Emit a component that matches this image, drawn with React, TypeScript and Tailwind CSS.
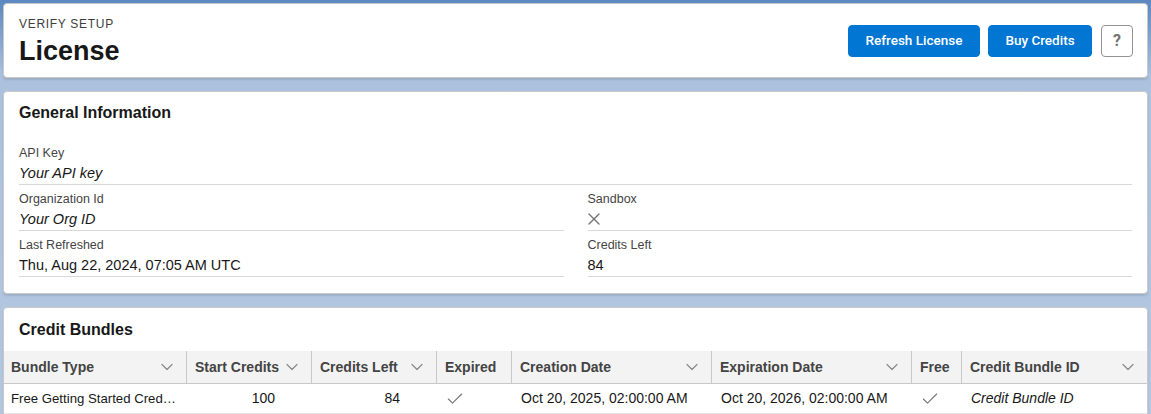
import { Check, X } from "lucide-react";

const font = { fontFamily: '"Liberation Sans", Arial, sans-serif' };
const buttonFont = { fontFamily: 'Roboto, "Liberation Sans", Arial, sans-serif' };

type Column = {
  label: string;
  width: string;
  sortable: boolean;
};

const columns: Column[] = [
  { label: "Bundle Type", width: "w-[183px]", sortable: true },
  { label: "Start Credits", width: "w-[125px]", sortable: true },
  { label: "Credits Left", width: "w-[125px]", sortable: true },
  { label: "Expired", width: "w-[75px]", sortable: false },
  { label: "Creation Date", width: "w-[200px]", sortable: true },
  { label: "Expiration Date", width: "w-[200px]", sortable: true },
  { label: "Free", width: "w-[50px]", sortable: false },
  { label: "Credit Bundle ID", width: "flex-1", sortable: true },
];

function Chevron() {
  return (
    <svg width="12" height="8" viewBox="0 0 12 8" className="shrink-0">
      <polyline
        points="1,1.5 6,6.5 11,1.5"
        fill="none"
        stroke="#8a8a8a"
        strokeWidth="1.2"
        strokeLinecap="round"
        strokeLinejoin="round"
      />
    </svg>
  );
}

function Field({ label, children }: { label: string; children: React.ReactNode }) {
  return (
    <div className="flex flex-col border-b border-[#d8d8d8]">
      <div className="text-[12.5px] leading-[18px] text-[#444444]">{label}</div>
      <div className="text-[14.5px] leading-[22px] text-[#181818] h-[22px] flex items-center">
        {children}
      </div>
    </div>
  );
}

function Card({ className = "", children }: { className?: string; children: React.ReactNode }) {
  return (
    <div
      className={`bg-white rounded-[4px] border border-[#c9c9c9] shadow-[0_2px_2px_rgba(0,0,0,0.1)] ${className}`}
    >
      {children}
    </div>
  );
}

export default function App() {
  return (
    <div
      className="w-[1151px] h-[414px] overflow-hidden bg-linear-to-b from-[#5b88c0] via-[#abc1dd] via-[18%] to-[#b4c7e1] px-[3px] pt-[3px] flex flex-col gap-[13px]"
      style={font}
    >
      {/* Page header */}
      <Card className="h-[75px] shrink-0 flex items-center justify-between pl-[15px] pr-[14px]">
        <div className="flex flex-col gap-[2px]">
          <div className="text-[12px] leading-[18px] tracking-[0.7px] text-[#3e3e3c] uppercase">
            Verify Setup
          </div>
          <h1 className="text-[27px] leading-[32px] font-bold text-[#181818]">License</h1>
        </div>
        <div className="flex items-center gap-2" style={buttonFont}>
          <button className="h-8 w-[132px] rounded-[4px] border border-[#0176d3] bg-[#0176d3] text-white text-[13.5px] font-medium">
            Refresh License
          </button>
          <button className="h-8 w-[104px] rounded-[4px] border border-[#0176d3] bg-[#0176d3] text-white text-[13.5px] font-medium">
            Buy Credits
          </button>
          <button className="w-8 h-8 rounded-[4px] border border-[#939393] bg-white text-[#747474] text-[16px] font-bold flex items-center justify-center ml-[1px]">
            ?
          </button>
        </div>
      </Card>

      {/* General information */}
      <Card className="h-[203px] shrink-0 px-[15px] pt-[9px]">
        <h2 className="text-[16px] leading-[24px] font-bold text-[#181818]">General Information</h2>
        <div className="mt-[19px] flex flex-col gap-[5px]">
          <Field label="API Key">
            <span className="italic">Your API key</span>
          </Field>
          <div className="grid grid-cols-2 gap-x-6 gap-y-[5px]">
            <Field label="Organization Id">
              <span className="italic">Your Org ID</span>
            </Field>
            <Field label="Sandbox">
              <X size={20} strokeWidth={1.6} color="#747474" className="-ml-[4px]" />
            </Field>
            <Field label="Last Refreshed">Thu, Aug 22, 2024, 07:05 AM UTC</Field>
            <Field label="Credits Left">84</Field>
          </div>
        </div>
      </Card>

      {/* Credit bundles table */}
      <Card className="flex-1 pt-[10px] rounded-b-none">
        <h2 className="px-[15px] text-[16px] leading-[24px] font-bold text-[#181818]">
          Credit Bundles
        </h2>
        <div className="mt-[9px]">
          <div className="flex h-[33px] bg-[#f3f3f3] border-b border-[#c9c9c9]">
            {columns.map((col, i) => (
              <div
                key={col.label}
                className={`${col.width} flex items-center justify-between pr-[13px] ${
                  i === 0 ? "pl-[7px]" : "pl-[8px]"
                } ${i < columns.length - 1 ? "border-r border-[#c9c9c9]" : ""}`}
              >
                <span className="text-[14px] font-bold text-[#444444]">{col.label}</span>
                {col.sortable && <Chevron />}
              </div>
            ))}
          </div>
          <div className="flex h-[30px] items-center border-b border-[#e5e5e5] text-[14px] text-[#181818]">
            <div className="w-[183px] pl-[7px] whitespace-nowrap text-[13.2px]">
              Free Getting Started Cred…
            </div>
            <div className="w-[125px] text-right pr-[37px]">100</div>
            <div className="w-[125px] text-right pr-[37px]">84</div>
            <div className="w-[75px] pl-[8px]">
              <Check size={20} strokeWidth={1.3} color="#747474" />
            </div>
            <div className="w-[200px] pl-[9px]">Oct 20, 2025, 02:00:00 AM</div>
            <div className="w-[200px] pl-[9px]">Oct 20, 2026, 02:00:00 AM</div>
            <div className="w-[50px] pl-[8px]">
              <Check size={20} strokeWidth={1.3} color="#747474" />
            </div>
            <div className="flex-1 pl-[9px] italic">Credit Bundle ID</div>
          </div>
        </div>
      </Card>
    </div>
  );
}
